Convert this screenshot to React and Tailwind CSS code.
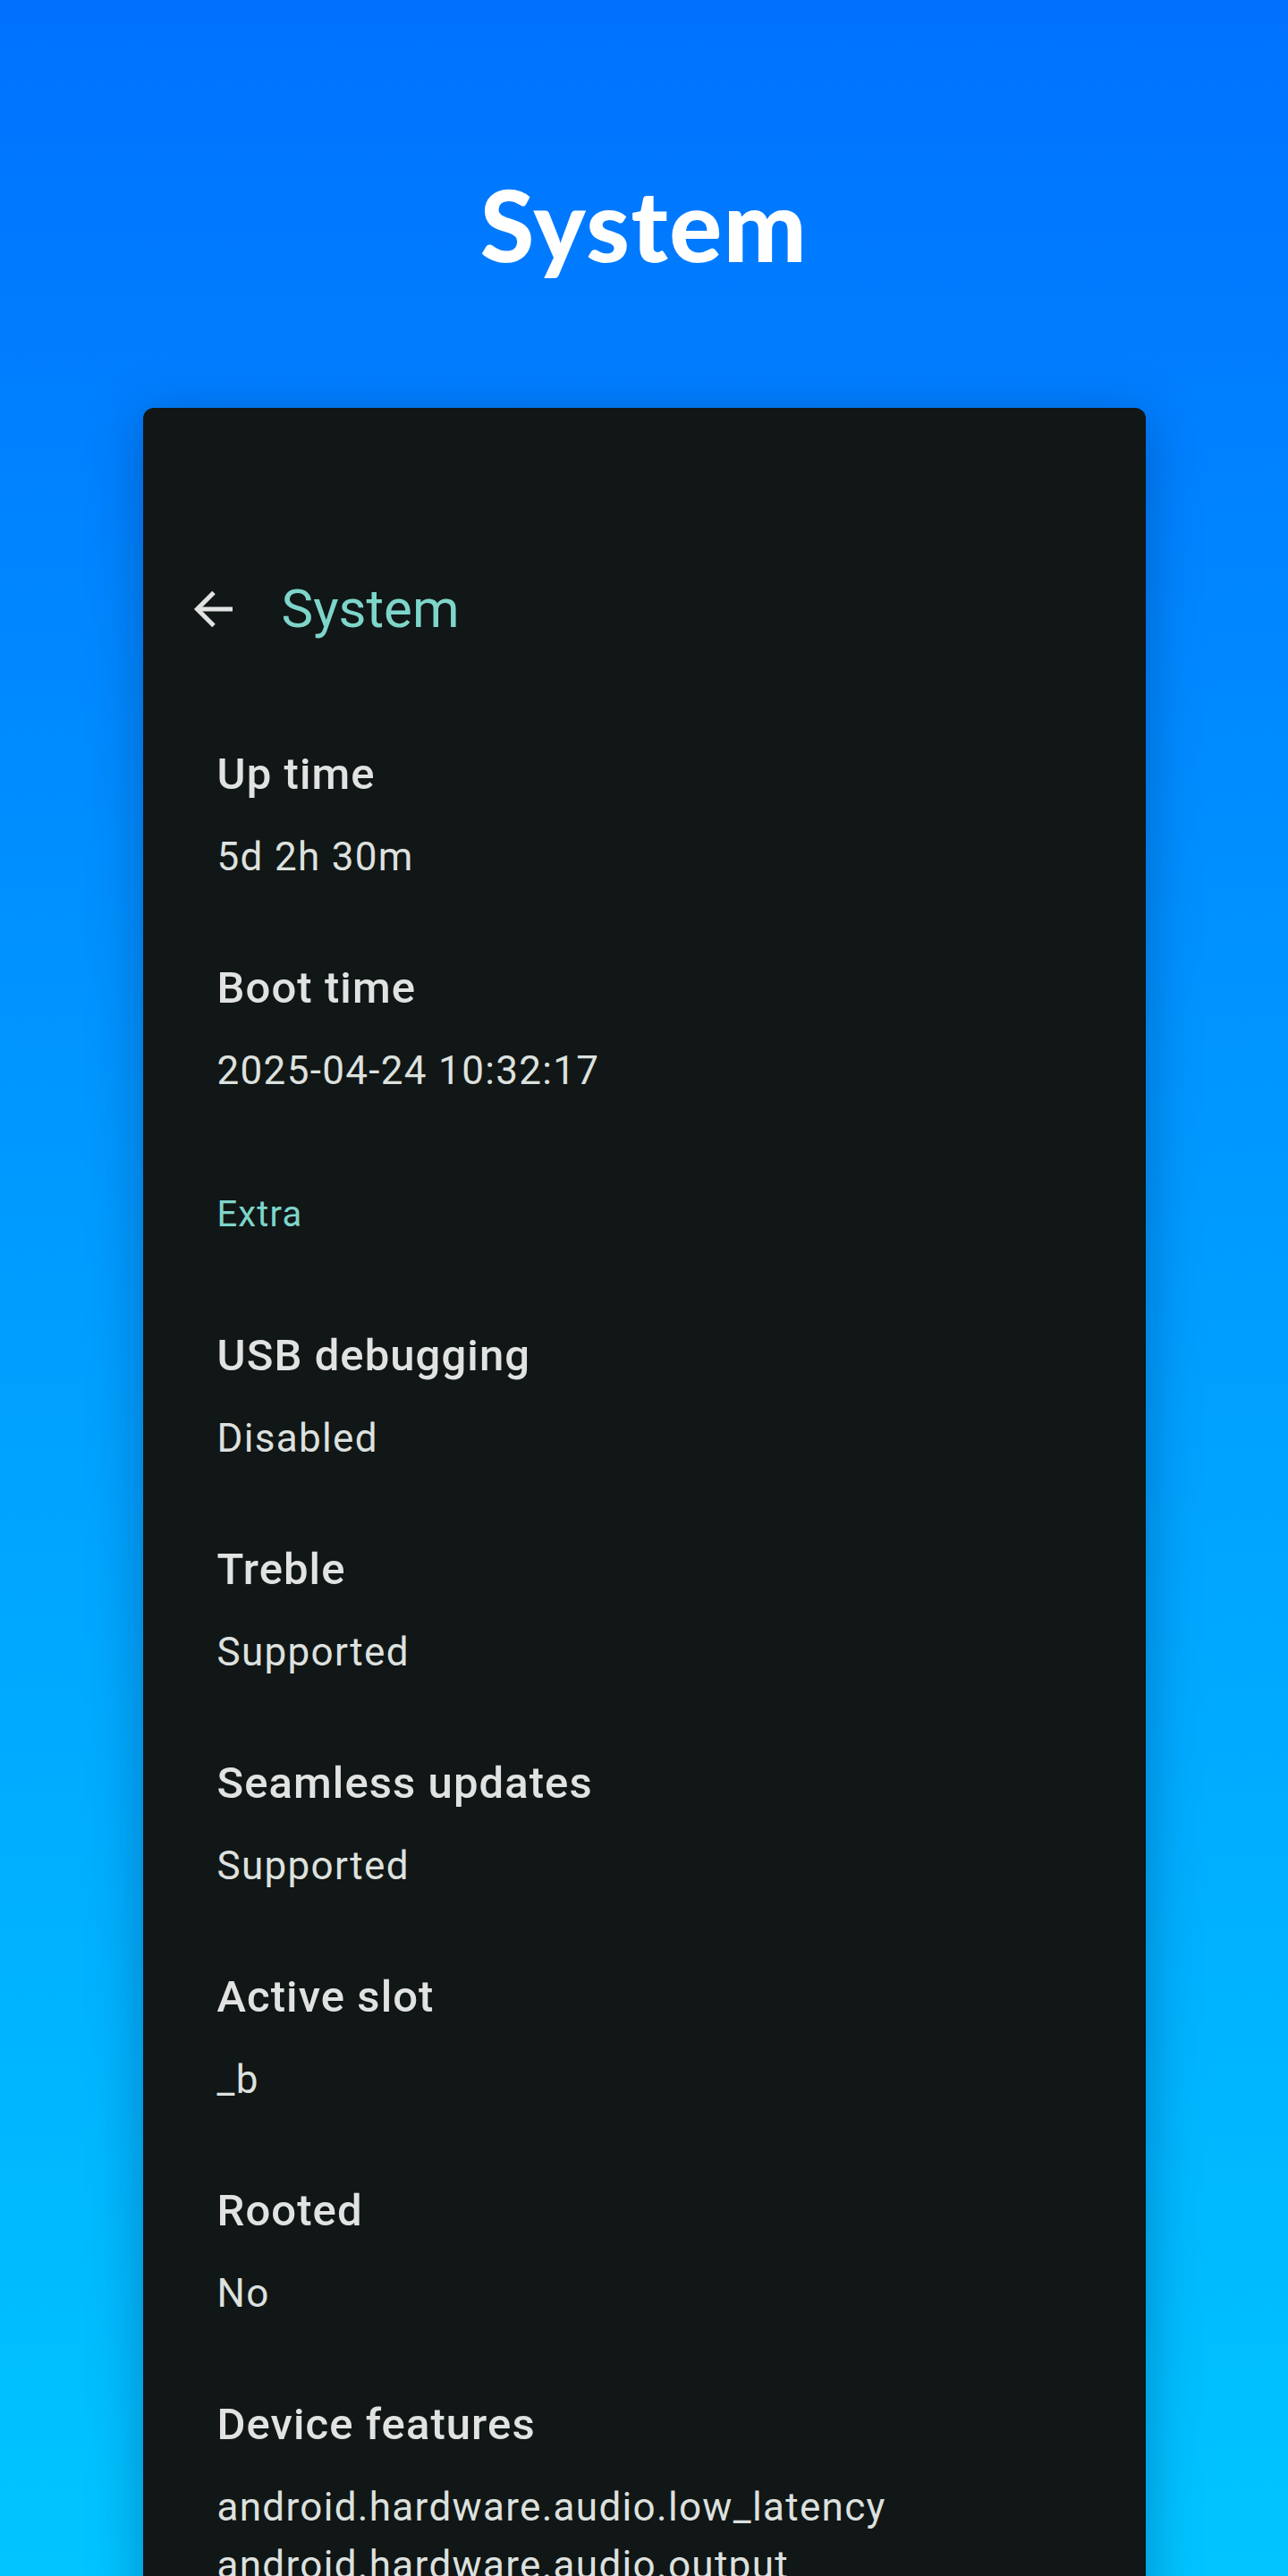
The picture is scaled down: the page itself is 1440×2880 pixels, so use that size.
import React from "react";

const items1 = [
  { t: "Up time", v: ["5d 2h 30m"] },
  { t: "Boot time", v: ["2025-04-24 10:32:17"] },
];

const items2 = [
  { t: "USB debugging", v: ["Disabled"] },
  { t: "Treble", v: ["Supported"] },
  { t: "Seamless updates", v: ["Supported"] },
  { t: "Active slot", v: ["_b"] },
  { t: "Rooted", v: ["No"] },
  {
    t: "Device features",
    v: [
      "android.hardware.audio.low_latency",
      "android.hardware.audio.output",
      "android.hardware.bluetooth",
      "android.hardware.bluetooth_le",
      "android.hardware.camera",
    ],
  },
];

function Item({ t, v }) {
  return (
    <div className="pt-[42px] pb-[43px]">
      <div className="text-[49px] leading-[58px] font-medium tracking-[0.022em] text-[#E1E3E2]">{t}</div>
      <div className="mt-[31px] text-[44px] leading-[65px] font-normal tracking-[0.03em] text-[#DDE1DF]">
        {v.map((line) => (
          <div key={line}>{line}</div>
        ))}
      </div>
    </div>
  );
}

export default function App() {
  return (
    <div className="w-[1440px] h-[2880px] overflow-hidden bg-linear-to-b from-[#0071FF] to-[#00C5FF]">
      <div className="pt-[184px] text-center">
        <h1
          className="text-white text-[110px] leading-[132px] font-black tracking-[0.015em]"
          style={{ fontFamily: "Lato, 'Open Sans', sans-serif" }}
        >
          System
        </h1>
      </div>
      <div
        className="mx-auto mt-[140px] w-[1121px] h-[2500px] rounded-[12px] bg-[#111616] shadow-[0_10px_60px_rgba(0,30,90,0.35)] pt-[185px]"
        style={{ fontFamily: "Roboto, 'Noto Sans', sans-serif" }}
      >
        <div className="flex items-center h-[80px] pl-[54px]">
          <svg width="48" height="48" viewBox="0 0 48 48" className="shrink-0">
            <path d="M46 24H7" stroke="#E1E3E2" strokeWidth="5" fill="none" />
            <path d="M25 5.5L6.5 24L25 42.5" stroke="#E1E3E2" strokeWidth="5" fill="none" />
          </svg>
          <span className="ml-[53px] text-[60px] leading-[80px] text-[#7ED5CA]">System</span>
        </div>
        <div className="mt-[74px] pl-[83px]">
          {items1.map((it) => (
            <Item key={it.t} {...it} />
          ))}
          <div className="pt-[61px] pb-[63px] text-[40px] leading-[48px] font-normal tracking-[0.028em] text-[#7ED5CA]">
            Extra
          </div>
          {items2.map((it) => (
            <Item key={it.t} {...it} />
          ))}
        </div>
      </div>
    </div>
  );
}
